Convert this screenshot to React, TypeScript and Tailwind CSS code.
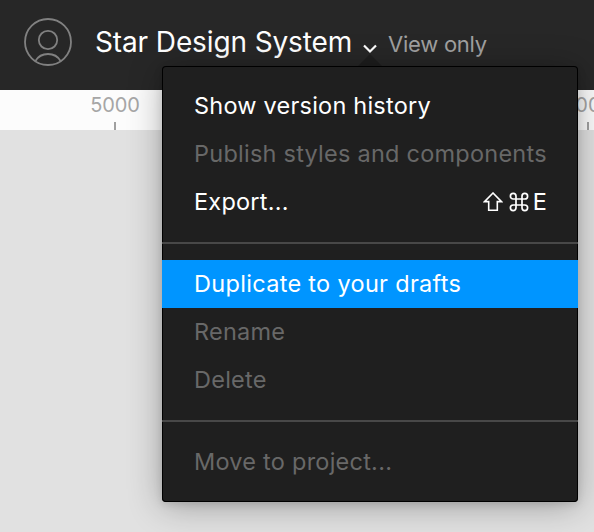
import React from "react";

type RowProps = { label: string; tone?: "normal" | "muted" | "active"; shortcut?: React.ReactNode };

const tones = {
  normal: "text-white tracking-[0.22px]",
  muted: "text-[#686868] tracking-[0.24px]",
  active: "bg-[#0095ff] text-white tracking-[0.31px]",
};

function Row({ label, tone = "normal", shortcut }: RowProps) {
  return (
    <li className={`flex h-12 items-center justify-between pl-8 pr-[31px] text-[23.5px] font-normal ${tones[tone]}`}>
      <span className="whitespace-nowrap">{label}</span>
      {shortcut}
    </li>
  );
}

function Separator() {
  return <li className="my-4 h-[2px] bg-[#484848]" />;
}

function ExportShortcut() {
  return (
    <span className="flex items-center">
      <svg className="h-5 w-5" viewBox="0 0 20 20" fill="none" stroke="white" strokeWidth="1.6">
        <path d="M10 1L1.5 9.6H5.7V18.3H14.3V9.6H18.5Z" />
      </svg>
      <svg className="ml-[6px] h-5 w-5" viewBox="0 0 20 20" fill="none" stroke="white" strokeWidth="1.7">
        <path d="M7 7H13V13H7ZM7 7V4.2A2.8 2.8 0 1 0 4.2 7ZM13 7H15.8A2.8 2.8 0 1 0 13 4.2ZM13 13V15.8A2.8 2.8 0 1 0 15.8 13ZM7 13H4.2A2.8 2.8 0 1 0 7 15.8Z" />
      </svg>
      <span className="ml-1">E</span>
    </span>
  );
}

function Mark({ value }: { value: string }) {
  return (
    <div className="flex w-[50px] shrink-0 flex-col items-center">
      <span className="h-8 leading-[30px] tracking-[-0.1px]">{value}</span>
      <span className="h-2 w-[2px] bg-[#a0a0a0]" />
    </div>
  );
}

export default function App() {
  return (
    <div className="relative h-[532px] w-[594px] overflow-hidden bg-[#e1e1e1] font-['Inter',sans-serif]">
      <header className="flex h-[90px] bg-[#272727] pl-6 pt-[18px]">
        <svg className="h-12 w-12 shrink-0" viewBox="0 0 48 48" fill="none" stroke="#818181" strokeWidth="1.8">
          <circle cx="24" cy="24" r="23" />
          <circle cx="24" cy="22" r="9.2" />
          <path d="M11.5 43C14 38.5 18.5 36 24 36S34 38.5 36.5 43" />
        </svg>
        <h1 className="ml-[23px] w-[257px] whitespace-nowrap text-[28px] font-normal leading-[48px] tracking-[-0.12px] text-white">
          Star Design System
        </h1>
        <svg className="ml-[10px] mt-[25px] h-3 w-4 shrink-0" viewBox="0 0 16 12" fill="none" stroke="white" strokeWidth="2.2">
          <path d="M2 2.5l6 6 6-6" />
        </svg>
        <span className="ml-[10px] mt-[2px] whitespace-nowrap text-[22px] font-normal leading-[48px] tracking-[-0.25px] text-[#a0a0a0]">View only</span>
      </header>
      <div className="flex h-10 gap-[423px] bg-[#fcfcfc] pl-[90px] text-[20px] text-[#a6a6a6]">
        <Mark value="5000" />
        <Mark value="6000" />
      </div>
      <div className="absolute left-[162px] top-[66px] h-[436px] w-[416px]">
        <div className="absolute -top-3 left-[196px] h-3 w-6 bg-[#1e1e1e] [clip-path:polygon(50%_0,100%_100%,0_100%)]" />
        <ul className="relative h-full rounded bg-[#1f1f1f] py-4 shadow-[inset_0_0_0_1px_#000,0_4px_34px_rgba(0,0,0,0.3),0_2px_8px_rgba(0,0,0,0.12)]">
          <Row label="Show version history" />
          <Row label="Publish styles and components" tone="muted" />
          <Row label="Export..." shortcut={<ExportShortcut />} />
          <Separator />
          <Row label="Duplicate to your drafts" tone="active" />
          <Row label="Rename" tone="muted" />
          <Row label="Delete" tone="muted" />
          <Separator />
          <Row label="Move to project..." tone="muted" />
        </ul>
      </div>
    </div>
  );
}
